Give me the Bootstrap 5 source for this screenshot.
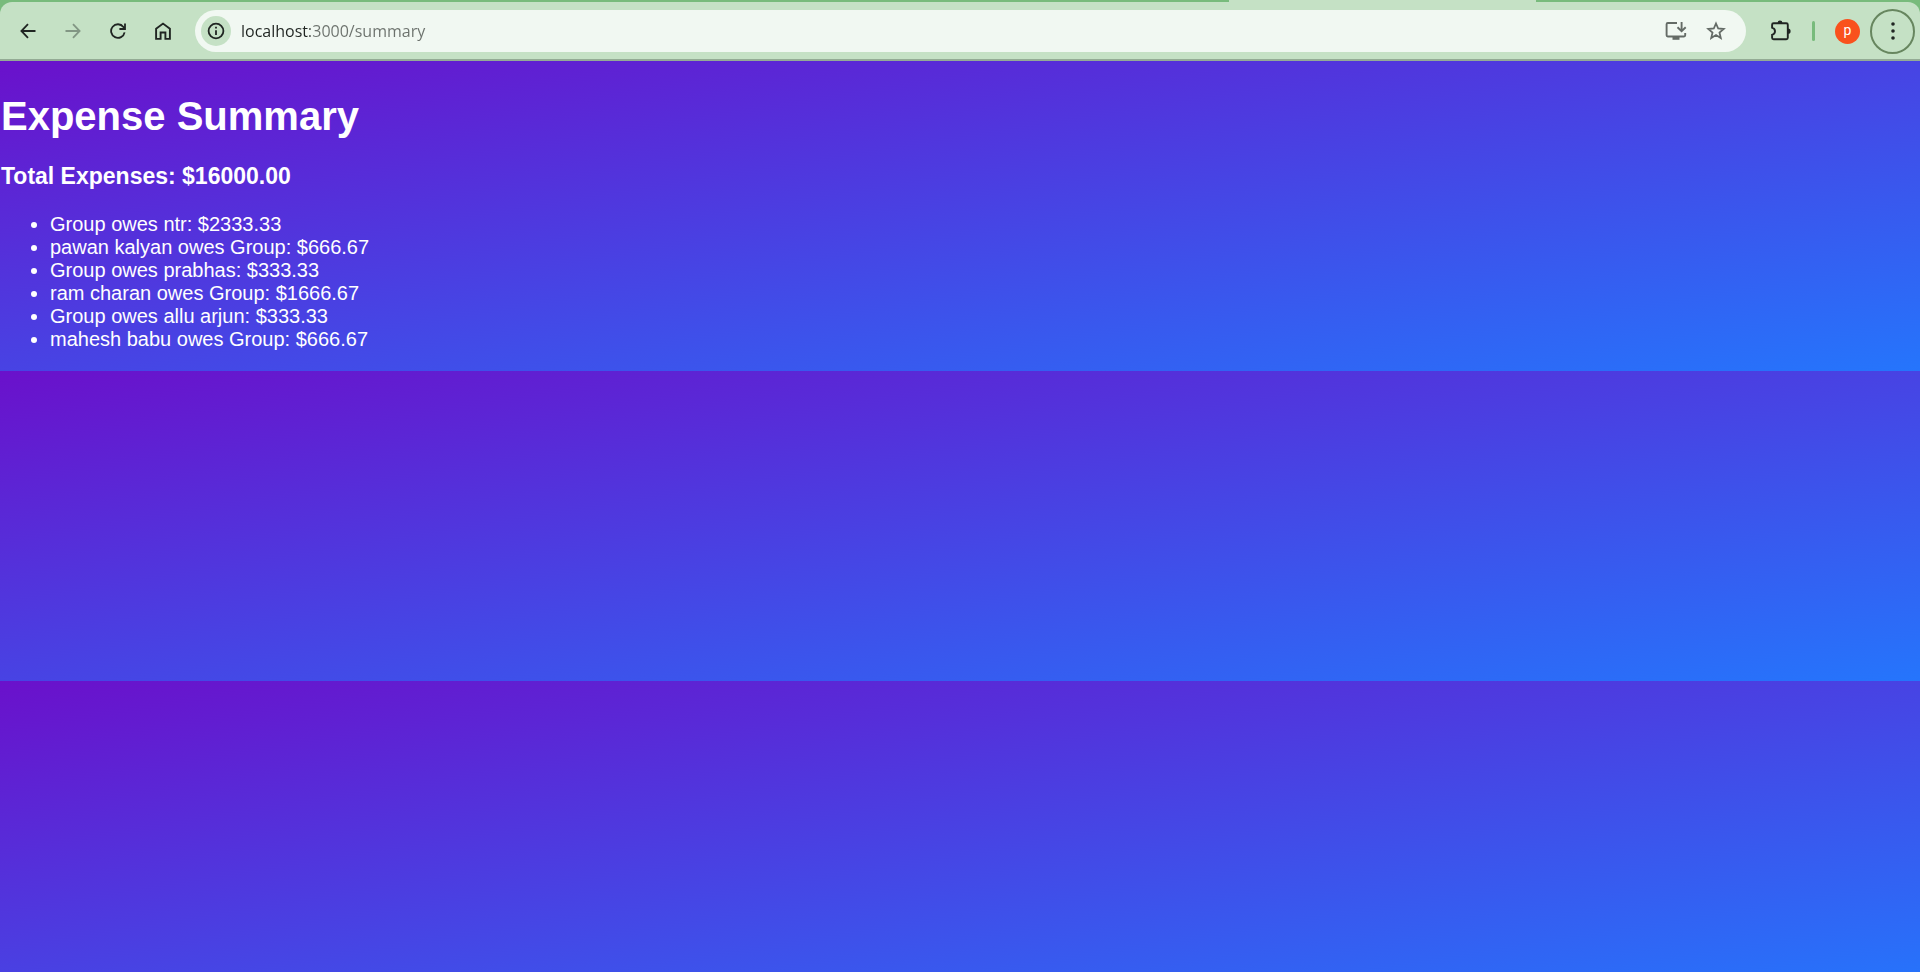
<!DOCTYPE html>
<html lang="en">
<head>
<meta charset="utf-8">
<meta name="viewport" content="width=device-width, initial-scale=1">
<title>Expense Summary</title>
<link href="https://cdn.jsdelivr.net/npm/bootstrap@5.3.0/dist/css/bootstrap.min.css" rel="stylesheet">
<style>
  body { font-family: "Liberation Sans", Arial, sans-serif; font-size: 20px; line-height: 23px; }
  .tab-strip { height: 2px; background: #78bb7c; }
  .active-tab { width: 16%; margin-right: 20%; background: #c5e1c5; }
  .strip-wrap { background: #78bb7c; }
  .toolbar { padding: 8px 5px 7px; background: #c5e1c5; border-bottom: 2px solid #94ab95; border-radius: 12px 12px 0 0; }
  .tool-btn { width: 45px; height: 42px; color: #202522; border: 0; background: none; padding: 0; }
  .tool-btn:disabled { color: #829684; opacity: 1; }
  .address { height: 42px; margin: 0 12px 0 10px; padding: 0 10px 0 6px; background: #f1f8f2; border-radius: 21px; }
  .info-btn { width: 30px; height: 30px; background: #c5e1c5; color: #202522; border: 0; border-radius: 50%; padding: 0; }
  .addr-btn { width: 40px; height: 40px; color: #646b66; border: 0; background: none; padding: 0; }
  .url-input { margin-left: 10px; padding: 0; border: 0; outline: 0; font-family: "Open Sans", "Segoe UI", sans-serif; font-size: 16px; line-height: 24px;
    color: transparent; caret-color: #202522; background: linear-gradient(90deg, #1f2421 69px, #6b716c 69px); -webkit-background-clip: text; background-clip: text; }
  .divider { width: 3px; height: 20px; margin: 0 20px 0 9px; background: #78bb7c; border-radius: 2px; }
  .avatar { width: 25px; height: 25px; margin-right: 10px; padding: 0 0 3px; border: 0; border-radius: 50%; background: #f9511d; color: #fff; font-family: Roboto, sans-serif; font-size: 14px; line-height: 20px; }
  .menu-btn { width: 45px; height: 45px; margin: -2px 0; padding: 0; border: 2px solid #67865f; border-radius: 50%; background: none; color: #202522; }
  .summary { background: linear-gradient(to bottom right, #6a11cb, #2575fc) 0 0 / 100% 310px repeat-y; }
  .summary h1 { font-size: 40px; line-height: 46px; margin: 32px 0 24px; }
  .summary h2 { font-size: 23px; line-height: 27px; margin: 0 0 23px; }
  .summary h1, .summary h2 { padding-left: 1px; }
  .summary ul { padding-left: 50px; margin: 0 0 20px; }
</style>
</head>
<body class="d-flex flex-column min-vh-100">
<header class="strip-wrap">
  <div class="tab-strip d-flex justify-content-end"><div class="active-tab"></div></div>
  <nav class="toolbar d-flex align-items-center" aria-label="Browser">
    <button class="tool-btn d-flex align-items-center justify-content-center" type="button" aria-label="Back"><svg width="16" height="16" viewBox="0 0 16 16" fill="none" stroke="currentColor" stroke-width="1.8"><path d="M15.5 8H2M8 1.2 1.4 8 8 14.8"/></svg></button>
    <button class="tool-btn d-flex align-items-center justify-content-center" type="button" aria-label="Forward" disabled><svg width="16" height="16" viewBox="0 0 16 16" fill="none" stroke="currentColor" stroke-width="1.8"><path d="M.5 8H14M8 1.2 14.6 8 8 14.8"/></svg></button>
    <button class="tool-btn d-flex align-items-center justify-content-center" type="button" aria-label="Reload"><svg width="16" height="16" viewBox="0 0 16 16" fill="none" stroke="currentColor" stroke-width="1.8"><path d="M14.6 9.3A6.8 6.8 0 1 1 13.4 4L14.6 5.5M15 .6V6H9.4"/></svg></button>
    <button class="tool-btn d-flex align-items-center justify-content-center" type="button" aria-label="Home"><svg width="16" height="18" viewBox="0 0 16 18" fill="none" stroke="currentColor" stroke-width="1.9"><path d="M1.1 6.8 8 1.6 14.9 6.8V16.9H10.4V10.5H5.6V16.9H1.1Z"/></svg></button>
    <div class="address d-flex align-items-center flex-grow-1">
      <button class="info-btn d-flex align-items-center justify-content-center" type="button" aria-label="Site information"><svg width="18" height="18" viewBox="0 0 18 18" fill="none" stroke="currentColor" stroke-width="1.8"><circle cx="9" cy="9" r="7.4"/><path d="M9 8.2V13M9 4.8V6.6"/></svg></button>
      <input class="url-input flex-grow-1" type="text" aria-label="Address" value="localhost:3000/summary" spellcheck="false">
      <button class="addr-btn d-flex align-items-center justify-content-center" type="button" aria-label="Install app"><svg width="22" height="20" viewBox="0 0 22 20" fill="none" stroke="currentColor" stroke-width="1.9"><path d="M12 2H2.8Q1.6 2 1.6 3.2V14.3Q1.6 15.5 2.8 15.5H19Q20.2 15.5 20.2 14.3V12M16.6 1V10M12.5 6.2 16.6 10.2 20.7 6.2"/><path d="M7.5 17.3H14.5" stroke-width="3"/></svg></button>
      <button class="addr-btn d-flex align-items-center justify-content-center" type="button" aria-label="Bookmark"><svg width="20" height="20" viewBox="0 0 20 20" fill="none" stroke="currentColor" stroke-width="1.8"><path d="M10 2.5 12.2 7.5 17.7 8 13.5 11.6 14.8 17 10 14.1 5.2 17 6.5 11.6 2.3 8 7.8 7.5Z"/></svg></button>
    </div>
    <button class="tool-btn d-flex align-items-center justify-content-center" type="button" aria-label="Extensions"><svg width="22" height="22" viewBox="0 0 22 22" fill="none" stroke="currentColor" stroke-width="1.9"><path d="M3.6 3.2H16.3Q17.8 3.2 17.8 4.7V17.8Q17.8 19.3 16.3 19.3H3.6Q2.1 19.3 2.1 17.8V14.8Q5 13.8 5 11.2 5 8.7 2.1 7.7V4.7Q2.1 3.2 3.6 3.2Z"/><path d="M7.6 3A2.4 2.4 0 0 1 12.4 3ZM18 8.6A2.6 2.6 0 0 1 18 13.8Z" fill="currentColor" stroke="none"/></svg></button>
    <div class="divider"></div>
    <button class="avatar" type="button" aria-label="Profile p">p</button>
    <button class="menu-btn d-flex align-items-center justify-content-center" type="button" aria-label="Menu"><svg width="6" height="20" viewBox="0 0 6 20" fill="currentColor"><circle cx="3" cy="3" r="1.8"/><circle cx="3" cy="10" r="1.8"/><circle cx="3" cy="17" r="1.8"/></svg></button>
  </nav>
</header>
<main class="summary flex-grow-1 text-white d-flex flex-column">
  <h1 class="fw-bold">Expense Summary</h1>
  <h2 class="fw-bold">Total Expenses: $16000.00</h2>
  <ul>
    <li>Group owes ntr: $2333.33</li>
    <li>pawan kalyan owes Group: $666.67</li>
    <li>Group owes prabhas: $333.33</li>
    <li>ram charan owes Group: $1666.67</li>
    <li>Group owes allu arjun: $333.33</li>
    <li>mahesh babu owes Group: $666.67</li>
  </ul>
</main>
<script src="https://cdn.jsdelivr.net/npm/bootstrap@5.3.0/dist/js/bootstrap.bundle.min.js"></script>
</body>
</html>
